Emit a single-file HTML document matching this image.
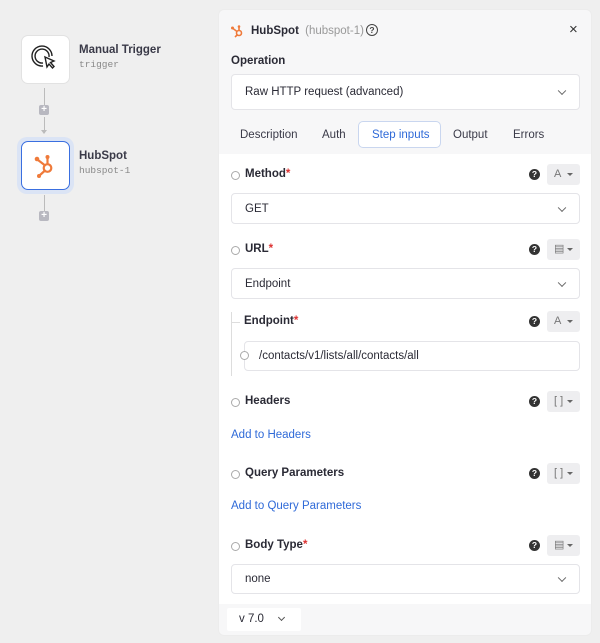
<!DOCTYPE html>
<html><head><style>
*{box-sizing:border-box;margin:0;padding:0}
body{width:600px;height:643px;background:#efefef;font-family:"Liberation Sans",sans-serif;position:relative;overflow:hidden;color:#2a2a35}
.abs{position:absolute}
.node{position:absolute;left:21px;width:49px;height:49px;background:#fff;border-radius:7px;border:1px solid #e2e2e2}
.nt{position:absolute;left:79px;font-size:11.5px;font-weight:bold;color:#3a3a48}
.ns{position:absolute;left:79px;font-family:"Liberation Mono",monospace;font-size:9.5px;color:#888}
.plus{position:absolute;left:39px;width:10px;height:10px;background:#b8b8c0;border-radius:2px;color:#fff;font-size:10px;line-height:10px;text-align:center;font-weight:bold}
.vline{position:absolute;left:44px;width:1px;background:#bbb}
.panel{position:absolute;left:218px;top:9px;width:374px;height:627px;background:#f7f7f8;border-radius:6px;overflow:hidden;border:1px solid #ececec}
.body{position:absolute;left:0;top:144px;width:372px;height:450px;background:#fff}
.sel{position:absolute;background:#fff;border:1px solid #e4e4e8;border-radius:4px;font-size:11.5px;color:#2a2a35;padding-left:13px;display:flex;align-items:center}
.chev{position:absolute;right:14px;top:50%;width:6px;height:6px;border-right:1.1px solid #666;border-bottom:1.1px solid #666;transform:translateY(-70%) rotate(45deg)}
.lbl{position:absolute;font-size:11.5px;font-weight:bold;color:#2a2a35}
.lbl b{color:#d33;font-weight:bold}
.rad{position:absolute;width:9px;height:9px;border:1px solid #aaa;border-radius:50%;background:#fff}
.q{position:absolute;width:11px;height:11px;border-radius:50%;background:#333;color:#fff;font-size:8.5px;font-weight:bold;text-align:center;line-height:11px}
.tb{position:absolute;width:33px;height:21px;background:#eeeef0;border-radius:3px;font-size:11px;color:#777;padding-left:7px;line-height:21px}
.tb:after{content:"";position:absolute;right:7px;top:9px;border-left:3px solid transparent;border-right:3px solid transparent;border-top:3px solid #666}
.link{position:absolute;font-size:11.5px;color:#2f6ad8}
.tab{position:absolute;top:119px;font-size:11.5px;color:#3a3a48}
</style></head><body>
<div class="node" style="top:35px">
<svg width="49" height="49" viewBox="0 0 49 49" style="position:absolute;left:-1px;top:-1px"><g fill="none" stroke="#222" stroke-width="1.4"><path d="M28 22a7 7 0 1 0-6 6"/><path d="M31 21a10 10 0 1 0-9 10"/><path d="M24 22l9 4-3.5 1.5 3.5 4-1.5 1.5-3.5-4-2 3z" fill="#fff"/></g></svg>
</div>
<div class="nt" style="top:44px">Manual Trigger</div>
<div class="ns" style="top:59px">trigger</div>
<div class="vline" style="top:88px;height:17px"></div>
<div class="plus" style="top:105px">+</div>
<div class="vline" style="top:117px;height:16px"></div>
<div class="abs" style="left:41px;top:130px;border-left:3px solid transparent;border-right:3px solid transparent;border-top:4px solid #bbb"></div>
<div class="abs" style="left:17px;top:137px;width:57px;height:57px;border-radius:10px;background:#dbe4f5"></div>
<div class="node" style="top:141px;border:1.5px solid #3a6fe0">
<svg width="49" height="49" viewBox="0 0 49 49" style="position:absolute;left:-1.5px;top:-1.5px"><g stroke="#ef7a3a" fill="none" stroke-width="2.2"><circle cx="26.5" cy="27" r="3.8"/><path d="M26.5 23V17M23.5 24L17 19M23.5 30L19 34"/></g><g fill="#ef7a3a"><circle cx="26.5" cy="16" r="2"/><circle cx="16" cy="18" r="2.3"/><circle cx="18" cy="35" r="2"/></g></svg>
</div>
<div class="nt" style="top:150px">HubSpot</div>
<div class="ns" style="top:165px">hubspot-1</div>
<div class="vline" style="top:195px;height:16px"></div>
<div class="plus" style="top:211px">+</div>

<div class="panel">
<svg width="16" height="16" viewBox="0 0 16 16" style="position:absolute;left:11px;top:13px"><g stroke="#ef7a3a" fill="none" stroke-width="1.6"><circle cx="9" cy="10" r="2.5"/><path d="M9 7.5V4M7 8.5L3 5.5M7.3 11.8L5 14"/></g><circle cx="9" cy="3.5" r="1.3" fill="#ef7a3a"/><circle cx="2.5" cy="5" r="1.5" fill="#ef7a3a"/></svg>
<div class="abs" style="left:32px;top:15px;font-size:11.5px;font-weight:bold">HubSpot <span style="font-weight:normal;color:#999;margin-left:3px">(hubspot-1)</span></div>
<div class="abs" style="left:147px;top:14px;width:12px;height:12px;border:1.2px solid #444;border-radius:50%;font-size:8.5px;text-align:center;line-height:10px;font-weight:bold;color:#444">?</div>
<div class="abs" style="left:350px;top:11px;font-size:15px;color:#333">×</div>
<div class="lbl" style="left:12px;top:45px">Operation</div>
<div class="sel" style="left:12px;top:64px;width:349px;height:36px">Raw HTTP request (advanced)<span class="chev"></span></div>
<div class="tab" style="left:21px">Description</div>
<div class="tab" style="left:103px">Auth</div>
<div class="abs" style="left:139px;top:111px;width:83px;height:27px;border:1.2px solid #c9d6ef;border-radius:5px;background:#fff"></div>
<div class="tab" style="left:153px;color:#2f6ad8">Step inputs</div>
<div class="tab" style="left:234px">Output</div>
<div class="tab" style="left:294px">Errors</div>

<div class="body"></div>
<div class="rad" style="left:12px;top:161px"></div>
<div class="lbl" style="left:26px;top:158px">Method<b>*</b></div>
<div class="q" style="left:310px;top:159px">?</div>
<div class="tb" style="left:328px;top:154px">A</div>
<div class="sel" style="left:12px;top:183px;width:349px;height:31px">GET<span class="chev"></span></div>
<div class="rad" style="left:12px;top:236px"></div>
<div class="lbl" style="left:26px;top:233px">URL<b>*</b></div>
<div class="q" style="left:310px;top:234px">?</div>
<div class="tb" style="left:328px;top:229px">▤</div>
<div class="sel" style="left:12px;top:258px;width:349px;height:31px">Endpoint<span class="chev"></span></div>
<div class="abs" style="left:12px;top:302px;width:1px;height:64px;background:#ddd"></div>
<div class="abs" style="left:12px;top:312px;width:9px;height:1px;background:#ddd"></div>
<div class="lbl" style="left:25px;top:305px">Endpoint<b>*</b></div>
<div class="q" style="left:310px;top:306px">?</div>
<div class="tb" style="left:328px;top:301px">A</div>
<div class="sel" style="left:25px;top:331px;width:336px;height:30px;padding-left:14px">/contacts/v1/lists/all/contacts/all</div>
<div class="rad" style="left:21px;top:341px"></div>
<div class="rad" style="left:12px;top:388px"></div>
<div class="lbl" style="left:26px;top:385px">Headers</div>
<div class="q" style="left:310px;top:386px">?</div>
<div class="tb" style="left:328px;top:381px">[ ]</div>
<div class="link" style="left:12px;top:419px">Add to Headers</div>
<div class="rad" style="left:12px;top:460px"></div>
<div class="lbl" style="left:26px;top:457px">Query Parameters</div>
<div class="q" style="left:310px;top:458px">?</div>
<div class="tb" style="left:328px;top:453px">[ ]</div>
<div class="link" style="left:12px;top:490px">Add to Query Parameters</div>
<div class="rad" style="left:12px;top:532px"></div>
<div class="lbl" style="left:26px;top:529px">Body Type<b>*</b></div>
<div class="q" style="left:310px;top:530px">?</div>
<div class="tb" style="left:328px;top:525px">▤</div>
<div class="sel" style="left:12px;top:554px;width:349px;height:30px">none<span class="chev"></span></div>
<div class="abs" style="left:8px;top:598px;width:74px;height:23px;background:#fff;border-radius:2px;font-size:11.5px;padding-left:12px;line-height:23px">v 7.0<span style="position:absolute;left:52px;top:7px;width:5px;height:5px;border-right:1.2px solid #555;border-bottom:1.2px solid #555;transform:rotate(45deg)"></span></div>
</div>
</body></html>
